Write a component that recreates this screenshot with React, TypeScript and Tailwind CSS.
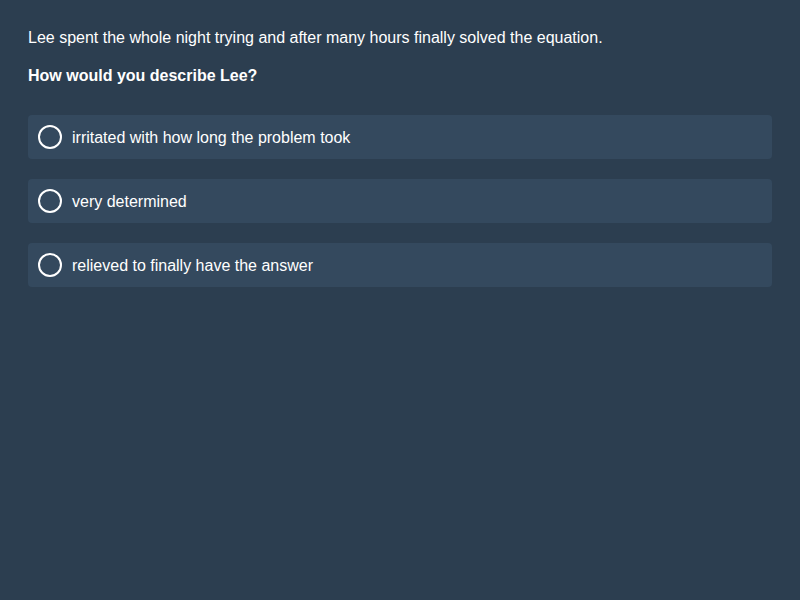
import React from "react";

const options = [
  "irritated with how long the problem took",
  "very determined",
  "relieved to finally have the answer",
];

export default function App() {
  return (
    <div
      className="min-h-[600px] w-full bg-[#2c3e50] p-7 text-white"
      style={{ fontFamily: '"Liberation Sans", Arial, sans-serif' }}
    >
      <p className="text-base leading-5">
        Lee spent the whole night trying and after many hours finally solved the equation.
      </p>
      <p className="mt-[18px] text-base font-bold leading-5">How would you describe Lee?</p>
      <div className="mt-[29px] flex flex-col gap-5">
        {options.map((label) => (
          <label
            key={label}
            className="flex h-11 cursor-pointer items-center gap-2.5 rounded bg-[#34495e] pl-2.5"
          >
            <span className="h-6 w-6 shrink-0 rounded-full border-2 border-white" />
            <span className="pt-0.5 text-base leading-5">{label}</span>
          </label>
        ))}
      </div>
    </div>
  );
}
